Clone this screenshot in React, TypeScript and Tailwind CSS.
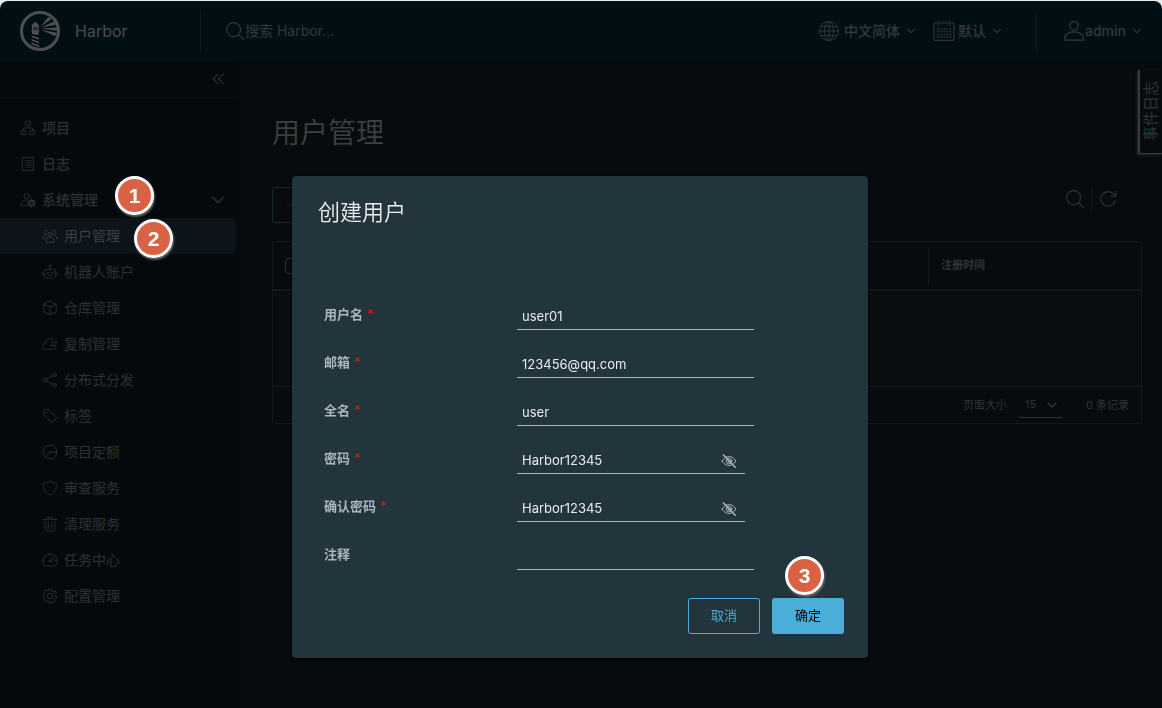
import { useId, useState, type ReactNode } from "react";

const LATIN = "font-['Inter','Noto_Sans_CJK_SC',sans-serif]";

interface IconProps {
    children: ReactNode;
    className?: string;
    width?: number;
}

function Icon({ children, className = "size-4", width = 2 }: IconProps) {
    return (
        <svg viewBox="0 0 36 36" className={`shrink-0 ${className}`} fill="none" stroke="currentColor" strokeWidth={width} strokeLinejoin="round" strokeLinecap="round" aria-hidden="true">
            {children}
        </svg>
    );
}

function Chevron({ className = "size-2.5" }: { className?: string }) {
    return (
        <Icon className={className} width={4}>
            <path d="M6 12l12 12 12-12" />
        </Icon>
    );
}

function SearchIcon({ className }: { className?: string }) {
    return (
        <Icon className={className}>
            <circle cx="15.5" cy="15.5" r="12.5" />
            <path d="M25 25l8.500 8.500" />
        </Icon>
    );
}

function EyeHideIcon() {
    return (
        <Icon>
            <path d="M2.500 18C6 11.500 11.500 8 18 8s12 3.500 15.500 10C30 24.500 24.500 28 18 28S6 24.500 2.500 18z" />
            <circle cx="18" cy="18" r="6.500" />
            <circle cx="18" cy="18" r="2.500" />
            <path d="M5 4l27 28" strokeWidth="3" />
        </Icon>
    );
}

function Logo() {
    return (
        <svg viewBox="0 0 40 40" className="size-10 shrink-0" fill="#4d4f50" aria-hidden="true">
            <circle cx="20" cy="20" r="18.5" fill="none" stroke="#4d4f50" strokeWidth="3" />
            <path d="M15.200 10.800l3.800 3.400v1H11.500v-1z" />
            <path d="M12 15h1.500v4.500H12zM17.200 15h1.500v4.500h-1.500zM13.500 15h4v1.500h-4zM14.700 17.500h1.800V19h-1.800z" />
            <path d="M11.500 19.300h7.700v1.500h-7.700zM12 20.800h6.700V24L12 23z" />
            <path d="M11.800 24.500l7.200 2.500v1.800l-7.200-2.600zM11.600 28l7.600 2.700v1.800l-7.600-2.800zM11.400 31.500l8 2.900v1.800l-8-2.900zM11.200 35l8.400 2v1.500l-5-1z" />
            <path d="M20.600 15.600l7.800-9.800 3 2.400zM21 16.600l13.200-6.400 1.800 3.600zM21.200 17.600l16-1.200v3.400zM21 18.800l15.800 3-1.600 3.400z" />
        </svg>
    );
}

const navItems = [
    {
        label: "用户管理",
        active: true,
        icon: (
            <>
                <circle cx="18" cy="14" r="4.500" />
                <path d="M9 31v-4c0-4 4-6.500 9-6.500s9 2.500 9 6.500v4zM10 13a4 4 0 1 1 2-7M26 13a4 4 0 1 0-2-7M3 24v-4c0-2 2-4 5-4M33 24v-4c0-2-2-4-5-4" />
            </>
        ),
    },
    {
        label: "机器人账户",
        icon: (
            <>
                <rect x="6" y="12" width="24" height="20" rx="5" />
                <path d="M18 12V6M2 19v7M34 19v7M13 26h10" />
                <circle cx="18" cy="4" r="2" />
                <circle cx="13" cy="20" r="1.500" />
                <circle cx="23" cy="20" r="1.500" />
            </>
        ),
    },
    {
        label: "仓库管理",
        icon: <path d="M18 3l14 6.500v17L18 33 4 26.500v-17zM4 9.500L18 16l14-6.500M18 16v17" />,
    },
    {
        label: "复制管理",
        icon: <path d="M31 22c1 4-1 8-5 8H8c-4 0-7-3-7-6.500S4 17 7.500 17C7 10 12 6 17 6c4 0 7 2 8 5M22 14h12M31 11l3 3-3 3M31 21H20M23 18l-3 3 3 3" />,
    },
    {
        label: "分布式分发",
        icon: (
            <>
                <circle cx="6.500" cy="18" r="4" />
                <circle cx="28" cy="6.500" r="4" />
                <circle cx="28" cy="29.500" r="4" />
                <path d="M10 16l14.500-7.500M10 20l14.500 7.500" />
            </>
        ),
    },
    {
        label: "标签",
        icon: (
            <>
                <path d="M4 5.500V15l16.500 17c1 1 2 1 3 0l8.500-8.500c1-1 1-2 0-3L16 4H5.500C4.500 4 4 4.500 4 5.500z" />
                <circle cx="10" cy="10" r="1" />
            </>
        ),
    },
    {
        label: "项目定额",
        icon: (
            <>
                <circle cx="18" cy="18" r="15.500" />
                <path d="M7 29l10-11h16" />
            </>
        ),
    },
    {
        label: "审查服务",
        icon: <path d="M18 2.500C13 6 9 7 4 7v10c0 8 5 13 14 17 9-4 14-9 14-17V7c-5 0-9-1-14-4.500z" />,
    },
    {
        label: "清理服务",
        icon: <path d="M7 11v20c0 1.500 1 2.500 2.500 2.500h17c1.500 0 2.500-1 2.500-2.500V11M3 7.500h30M13 7V3h10v4M14 13v15M22 13v15" />,
    },
    {
        label: "任务中心",
        icon: (
            <>
                <path d="M6 31C3 28 1.500 24.500 1.500 21a16.500 16.500 0 0 1 33 0c0 3.500-1.500 7-4.500 10zM18 5v4M2 20h4M30 20h4M7 10l3 3" />
                <circle cx="18" cy="21" r="2.500" />
                <path d="M20 19l6-7" />
            </>
        ),
    },
    {
        label: "配置管理",
        icon: (
            <>
                <circle cx="18" cy="18" r="6" />
                <path d="M15 3h6l1 4 3.500 1.500L29 6.500l3.500 4L30 14l1 3 3 1.500v4L30 23l-2 3.500 1 3.500-4 3-3.500-2-2 3h-4l-1.500-3.500L11 29.500 7.500 31 4 27.500 6 24l-1-4-3-1.500v-4L6 13l1.500-3.500L6 6.500l4-3L13.500 6z" />
            </>
        ),
    },
];

function StepBadge({ step, className }: { step: number; className: string }) {
    return (
        <span className={`absolute z-20 flex size-[39px] items-center justify-center rounded-full border-3 border-white bg-[#d96244] font-['Liberation_Sans',sans-serif] text-[21px] font-bold text-white shadow-[1px_2px_2px_rgba(120,120,120,0.8)] ${className}`}>
            {step}
        </span>
    );
}

function Header() {
    return (
        <header className="flex h-[60px] items-center rounded-t-lg bg-[#010f15] px-5 text-sm text-[#34393c]">
            <a href="#home" className="flex w-[180px] items-center gap-[15px]">
                <Logo />
                <span className="text-base text-[#4b4d4e]">Harbor</span>
            </a>
            <label className="flex h-10 flex-1 items-center border-l border-[#0b1a20] pl-6">
                <SearchIcon className="size-5" />
                <input type="search" aria-label="搜索" placeholder="搜索 Harbor..." className="w-60 bg-transparent outline-none placeholder:text-[#34393c]" />
            </label>
            <button className="flex items-center font-medium">
                <Icon className="size-[22px]" width={1.5}>
                    <circle cx="18" cy="18" r="15.500" />
                    <ellipse cx="18" cy="18" rx="7.500" ry="15.500" />
                    <path d="M18 2.500v31M2.500 18h31M5 10.500h26M5 25.500h26" />
                </Icon>
                <span className="mr-1.5 ml-1">中文简体</span>
                <Chevron />
            </button>
            <button className="ml-4 flex items-center font-medium">
                <Icon className="size-6" width={1.5}>
                    <path d="M7 6H3v26h30V6h-4M12 6h12M9.500 3v7M26.500 3v7" />
                    <path d="M9 15h19M9 19h19M9 23h19M9 27h19" strokeDasharray="1 3.500" strokeWidth="2" />
                </Icon>
                <span className="mr-1.5 ml-0.5">默认</span>
                <Chevron />
            </button>
            <div className="ml-[34px] h-10 w-px bg-[#0f1d22]" />
            <button className="ml-[26px] flex items-center font-medium">
                <Icon className="size-[22px]">
                    <circle cx="18" cy="9.500" r="7" />
                    <path d="M3 33v-6c3-5 8.500-7.500 15-7.500S30 22 33 27v6z" />
                </Icon>
                <span className="mr-1.5">admin</span>
                <Chevron />
            </button>
        </header>
    );
}

function Sidebar() {
    return (
        <nav className="w-[236px] shrink-0 bg-[#05090c] text-sm text-[#2d3133]">
            <div className="flex h-[37px] items-center justify-end border-b border-[#090e11] pr-2.5">
                <button aria-label="收起">
                    <Icon width={2.5}>
                        <path d="M18 7L7 18l11 11M30 7L19 18l11 11" />
                    </Icon>
                </button>
            </div>
            <ul className="pt-3">
                <li>
                    <a href="#projects" className="flex h-9 items-center gap-1.5 pl-5 font-medium">
                        <Icon>
                            <path d="M13 3h10v9H13zM3 24h10v9H3zM23 24h10v9H23zM8 24v-6h20v6M18 12v6" />
                        </Icon>
                        项目
                    </a>
                </li>
                <li>
                    <a href="#logs" className="flex h-9 items-center gap-1.5 pl-5 font-medium">
                        <Icon>
                            <path d="M6 3h24v30H6zM15 10h10M15 15h10M15 20h10M15 25h10M11 10h0M11 15h0M11 20h0M11 25h0" />
                        </Icon>
                        日志
                    </a>
                </li>
                <li>
                    <button className="relative flex h-9 w-full items-center gap-1.5 pr-2.5 pl-5 font-medium">
                        <Icon>
                            <circle cx="15" cy="9" r="6" />
                            <path d="M17 31H2v-7c3-4 7-6 13-6" />
                            <circle cx="26" cy="25" r="5" strokeWidth="4" />
                            <path d="M26 16v4M26 30v4M17 25h4M31 25h4M20 19l2 2M30 29l2 2M32 19l-2 2M22 29l-2 2" strokeWidth="3" />
                        </Icon>
                        <span className="flex-1 text-left">系统管理</span>
                        <Icon width={3}>
                            <path d="M6 12l12 12 12-12" />
                        </Icon>
                        <StepBadge step={1} className="top-[-6px] left-[115px]" />
                    </button>
                    <ul>
                        {navItems.map((item) => (
                            <li key={item.label}>
                                <a href="#admin" className={`relative flex h-9 items-center gap-1.5 rounded-r pl-[42px] ${item.active ? "bg-[#0d1419] text-[#3b3f41]" : ""}`}>
                                    <Icon>{item.icon}</Icon>
                                    {item.label}
                                    {item.active && <StepBadge step={2} className="top-px left-[134px]" />}
                                </a>
                            </li>
                        ))}
                    </ul>
                </li>
            </ul>
        </nav>
    );
}

function UserTable() {
    return (
        <div className="mt-[18px] rounded border border-[#15191b] bg-[#070b0e] text-[11px] text-[#303436]">
            <table className="w-full">
                <thead>
                    <tr className="h-12 border-b-2 border-[#15191b]">
                        <th className="w-12 pl-3 text-left">
                            <input type="checkbox" aria-label="全选" className="block size-4 appearance-none rounded-sm border border-[#303436]" />
                        </th>
                        <th />
                        <th className="w-[213px] text-left font-semibold">
                            <div className="flex h-9 items-center border-l border-[#15191b] pl-3">注册时间</div>
                        </th>
                    </tr>
                </thead>
                <tbody>
                    <tr className="h-24 bg-[#080d0f]">
                        <td colSpan={3} />
                    </tr>
                </tbody>
            </table>
            <div className="flex h-[37px] items-center justify-end border-t border-[#15191b] pr-3">
                <label htmlFor="page-size">页面大小</label>
                <div className="relative ml-3 flex w-[43px] items-center border-b border-[#303436]">
                    <select id="page-size" defaultValue="15" className="h-6 w-full appearance-none bg-transparent pl-1.5 outline-none">
                        <option>15</option>
                        <option>25</option>
                        <option>50</option>
                    </select>
                    <Chevron className="pointer-events-none absolute right-1 size-3" />
                </div>
                <span className="ml-6">0 条记录</span>
            </div>
        </div>
    );
}

interface FieldProps {
    label: string;
    value: string;
    onChange: (value: string) => void;
    required?: boolean;
    secret?: boolean;
}

function Field({ label, value, onChange, required, secret }: FieldProps) {
    const id = useId();

    return (
        <div className="flex h-12 items-start">
            <label htmlFor={id} className="flex h-5 w-[193px] shrink-0 items-center text-[13px] font-semibold text-[#a9b6be]">
                {label}
                {required && <span className="ml-1 text-[13px] text-[#b32614]">*</span>}
            </label>
            <div className={`flex h-[25px] items-center border-b border-[#acbac3] ${secret ? "w-[228px]" : "w-[237px]"}`}>
                <input id={id} type="text" value={value} onChange={(e) => onChange(e.target.value)} className="w-full min-w-0 flex-1 bg-transparent px-[5px] text-[13px] text-[#e9ecef] outline-none" />
                {secret && (
                    <button type="button" aria-label="隐藏密码" className="mr-2 text-[#acbac3]">
                        <EyeHideIcon />
                    </button>
                )}
            </div>
        </div>
    );
}

function CreateUserDialog() {
    const [form, setForm] = useState({
        username: "user01",
        email: "123456@qq.com",
        realname: "user",
        password: "Harbor12345",
        confirm: "Harbor12345",
        comment: "",
    });

    const update = (key: keyof typeof form) => (value: string) => setForm({ ...form, [key]: value });

    return (
        <div className="fixed inset-0 z-10 flex items-start justify-center pt-44 pr-0.5">
            <div role="dialog" aria-labelledby="dialog-title" className="w-[576px] rounded-sm bg-[#22343c] p-6 shadow-[0_1px_3px_#000]">
                <h3 id="dialog-title" className="pl-0.5 text-[22px] leading-6 font-[350] text-[#e9ecef]">创建用户</h3>
                <form className="mt-[81px] pl-2">
                    <Field label="用户名" value={form.username} onChange={update("username")} required />
                    <Field label="邮箱" value={form.email} onChange={update("email")} required />
                    <Field label="全名" value={form.realname} onChange={update("realname")} required />
                    <Field label="密码" value={form.password} onChange={update("password")} required secret />
                    <Field label="确认密码" value={form.confirm} onChange={update("confirm")} required secret />
                    <Field label="注释" value={form.comment} onChange={update("comment")} />
                </form>
                <div className="mt-[5px] flex justify-end gap-3 text-[13px]">
                    <button className="h-9 w-[72px] rounded-[3px] border border-[#4aaed9] text-[#4aaed9]">取消</button>
                    <button className="relative h-9 w-[72px] rounded-[3px] bg-[#4aaed9] text-black">
                        确定
                        <StepBadge step={3} className="top-[-42px] left-[13px]" />
                    </button>
                </div>
            </div>
        </div>
    );
}

export default function App() {
    return (
        <div className={`flex min-h-screen flex-col bg-[#e8eeee] pt-px ${LATIN}`}>
            <Header />
            <div className="relative flex flex-1 bg-[#070b0e]">
                <Sidebar />
                <main className="min-w-0 flex-1 pt-[54px] pr-5 pl-9">
                    <h2 className="text-[28px] leading-9 font-[350] text-[#3d4042]">用户管理</h2>
                    <div className="mt-9 flex h-9 items-center justify-between">
                        <button aria-label="创建用户" className="flex h-9 w-28 items-center rounded-[3px] border border-[#132a35] px-3 text-[#132a35]">
                            <Icon>
                                <path d="M18 6v24M6 18h24" />
                            </Icon>
                        </button>
                        <div className="mr-6 mb-3 flex items-center text-[#303436]">
                            <button aria-label="搜索">
                                <SearchIcon className="size-5" />
                            </button>
                            <div className="mx-1.5 h-6 w-px bg-[#15191b]" />
                            <button aria-label="刷新">
                                <Icon className="size-5">
                                    <path d="M30 12A13 13 0 1 0 31 21M32 4v9h-9" />
                                </Icon>
                            </button>
                        </div>
                    </div>
                    <UserTable />
                </main>
                <button className="absolute top-[9px] right-0 flex h-[84px] w-6 items-center justify-center border-b border-l-2 border-[#3a3b3c] text-[15px] text-[#303436] shadow-[-1px_1px_3px_#26292a]">
                    <span className="rotate-180 [text-orientation:sideways] [writing-mode:vertical-rl]">事件日志</span>
                </button>
            </div>
            <CreateUserDialog />
        </div>
    );
}
